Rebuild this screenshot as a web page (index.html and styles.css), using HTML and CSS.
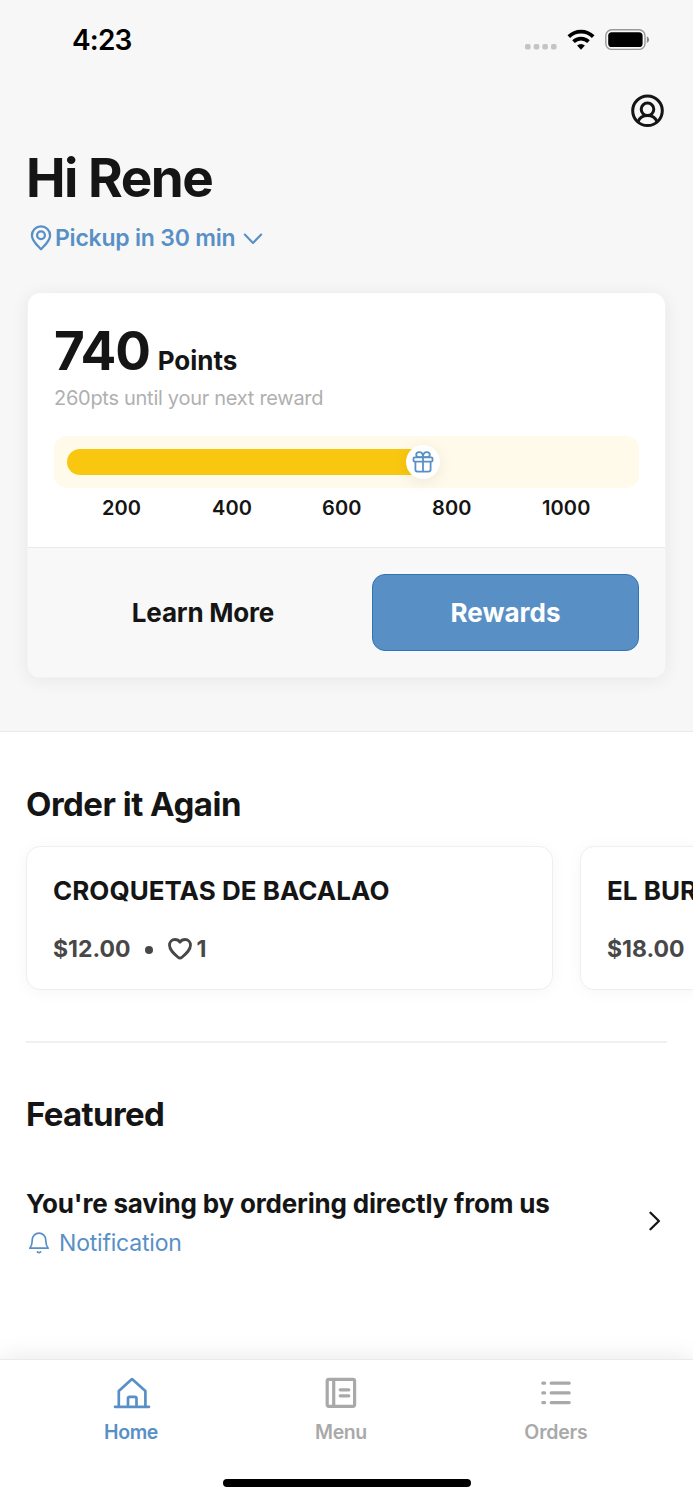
FILE: index.html
```html
<!DOCTYPE html>
<html lang="en">
<head>
<meta charset="utf-8">
<title>Home</title>
<link rel="stylesheet" href="styles.css">
</head>
<body>
<div class="app">
  <header class="hero">
    <div class="status">
      <span class="clock">4:23</span>
      <div class="indicators">
        <svg width="32" height="6" viewBox="0 0 32 6" fill="#c4c4c4"><rect width="5.6" height="5.6" rx="1.8"/><rect x="8.7" width="5.6" height="5.6" rx="1.8"/><rect x="17.3" width="5.6" height="5.6" rx="1.8"/><rect x="26" width="5.6" height="5.6" rx="1.8"/></svg>
        <svg class="wifi" width="28" height="22" viewBox="0 0 28 22" fill="none" stroke="#000" stroke-width="3.7"><path d="M1.8 7.6A17.3 17.3 0 0 1 26.2 7.6"/><path d="M6.5 12.6A10.7 10.7 0 0 1 21.5 12.6"/><path d="M14 20.7 10.1 16.6A5.8 5.8 0 0 1 17.9 16.6Z" fill="#000" stroke="none"/></svg>
        <svg class="battery" width="45" height="22" viewBox="0 0 45 22"><rect x=".8" y=".8" width="39.2" height="19.6" rx="6" fill="none" stroke="#999" stroke-width="1.4"/><rect x="3.2" y="3.2" width="34.4" height="14.8" rx="3.6"/><path d="M41.8 7.4C44.8 8.4 44.8 12.8 41.8 13.8Z" fill="#888"/></svg>
      </div>
    </div>
    <div class="profile">
      <svg width="34" height="34" viewBox="0 0 34 34" fill="none" stroke="#151515" stroke-width="3"><circle cx="17.5" cy="16.8" r="14.8"/><circle cx="17.5" cy="15.3" r="6.3"/><path d="M7.9 27.8C9.7 23.6 12.9 21.6 17.5 21.6S25.3 23.6 27.1 27.8"/></svg>
    </div>
    <h1 class="greeting">Hi Rene</h1>
    <div class="pickup">
      <svg class="pin" width="22" height="26" viewBox="0 0 22 26" fill="none" stroke="#5890c6" stroke-width="2.3"><path d="M11 24.2C8 20.9 1.9 16 1.9 10.4a9.1 9.1 0 0 1 18.2 0C20.1 16 14 20.9 11 24.2Z" stroke-linejoin="round"/><circle cx="11" cy="10.3" r="3.9"/></svg>
      <span class="pickup-text">Pickup in 30 min</span>
      <svg class="caret" width="20" height="12" viewBox="0 0 20 12" fill="none" stroke="#5890c6" stroke-width="2.1" stroke-linecap="round" stroke-linejoin="round"><path d="M1.8 1.5 10 9.9 18.2 1.5"/></svg>
    </div>
    <section class="points">
      <div class="points-body">
        <div class="score"><span class="score-value">740</span><span class="score-unit">Points</span></div>
        <p class="until">260pts until your next reward</p>
        <div class="track">
          <div class="fill">
            <div class="gift">
              <svg width="22" height="22" viewBox="0 0 22 22" fill="none" stroke="#5890c6" stroke-width="1.8" stroke-linejoin="round"><rect x="1.5" y="6.4" width="19" height="4.2" rx="1"/><path d="M3.4 10.6V18.6a2 2 0 0 0 2 2H16.6a2 2 0 0 0 2-2V10.6M11 5V20.6M11 6.2H7A2.8 2.8 0 0 1 4.2 3.8C4.2 2.2 5.5 1.2 7.2 1.2 9.7 1.2 11 3.6 11 6.2ZM11 6.2H15A2.8 2.8 0 0 0 17.8 3.8C17.8 2.2 16.5 1.2 14.8 1.2 12.3 1.2 11 3.6 11 6.2Z"/></svg>
            </div>
          </div>
        </div>
        <div class="ticks"><span>200</span><span>400</span><span>600</span><span>800</span><span>1000</span></div>
      </div>
      <div class="points-actions">
        <button class="btn">Learn More</button>
        <button class="btn btn-primary">Rewards</button>
      </div>
    </section>
  </header>
  <main class="content">
    <h2 class="heading order-heading">Order it Again</h2>
    <div class="carousel">
      <article class="item">
        <h3 class="item-name">CROQUETAS DE BACALAO</h3>
        <div class="item-meta">
          <span class="price">$12.00</span><span class="dot"></span>
          <svg class="heart" width="24" height="22" viewBox="0 0 24 22" fill="none" stroke="#474747" stroke-width="2.8" stroke-linejoin="round"><path d="M12 4.2C13.2 2.4 15 1.5 17 1.5 20.2 1.5 22.5 4 22.5 7.3 22.5 12 18.2 15.6 14 19.2Q12 20.9 10 19.2C5.8 15.6 1.5 12 1.5 7.3 1.5 4 3.8 1.5 7 1.5 9 1.5 10.8 2.4 12 4.2Z"/></svg>
          <span>1</span>
        </div>
      </article>
      <article class="item">
        <h3 class="item-name">EL BUR</h3>
        <div class="item-meta"><span class="price">$18.00</span></div>
      </article>
    </div>
    <hr class="divider">
    <h2 class="heading featured-heading">Featured</h2>
    <div class="feature">
      <div>
        <h3 class="feature-title">You're saving by ordering directly from us</h3>
        <div class="feature-kind">
          <svg width="22" height="22" viewBox="0 0 22 22" fill="none" stroke="#5890c6" stroke-width="1.7" stroke-linecap="round" stroke-linejoin="round"><path d="M1.8 16.2C3.6 14 4.2 12.4 4.2 8.8V8A6.8 6.8 0 0 1 17.8 8V8.8C17.8 12.4 18.4 14 20.2 16.2Z"/><path d="M9.4 19.8Q11 21.4 12.6 19.8"/></svg>
          <span class="kind-label">Notification</span>
        </div>
      </div>
      <svg class="next" width="12" height="20" viewBox="0 0 12 20" fill="none" stroke="#151515" stroke-width="2.3" stroke-linecap="round" stroke-linejoin="round"><path d="M1.5 1.8 9.9 10 1.5 18.2"/></svg>
    </div>
  </main>
  <nav class="tabs">
    <div class="tab-list">
      <a class="tab tab-home">
        <svg width="38" height="34" viewBox="0 0 38 34" fill="none" stroke="#5890c6" stroke-width="2.7" stroke-linecap="round" stroke-linejoin="round"><path d="M2 30.8H36M5.8 30.5V15L19 3.1 32.4 15V30.5M15 30.5V22.5Q15 20.8 16.7 20.8H21.8Q23.5 20.8 23.5 22.5V30.5"/></svg>
        <span>Home</span>
      </a>
      <a class="tab tab-menu">
        <svg width="32" height="34" viewBox="0 0 32 34" fill="none" stroke="#a9a9a9" stroke-width="3.2" stroke-linecap="round"><rect x="2.2" y="3.4" width="27.4" height="27" rx="1.8"/><path d="M8.7 4V30M15.2 13.8H23.8M15.2 19.8H23.8"/></svg>
        <span>Menu</span>
      </a>
      <a class="tab tab-orders">
        <svg width="32" height="34" viewBox="0 0 32 34" fill="none" stroke="#a9a9a9" stroke-width="3.2" stroke-linecap="round"><path d="M2.8 7.2H4.6M11.2 7.2H29.2M2.8 16.9H4.6M11.2 16.9H29.2M2.8 26.6H4.6M11.2 26.6H29.2"/></svg>
        <span>Orders</span>
      </a>
    </div>
    <div class="home-bar"></div>
  </nav>
</div>
</body>
</html>
```
FILE: styles.css
```css
* { box-sizing: border-box; }
body { margin: 0; font-family: Inter, "Liberation Sans", sans-serif; color: #151515; background: #fff; }
h1, h2, h3, p { margin: 0; white-space: nowrap; }
svg { display: block; flex: none; }
.app { width: 693px; height: 1500px; overflow: hidden; display: flex; flex-direction: column; background: #fff; }

.hero { height: 732px; flex: none; padding: 0 27px; background: #f7f7f7; border-bottom: 1px solid #e9e9e9; }
.status { height: 80px; padding: 25px 16.5px 0 45px; display: flex; justify-content: space-between; align-items: flex-start; }
.clock { font-size: 28px; line-height: 31px; font-weight: 600; letter-spacing: -.8px; color: #000; }
.indicators { display: flex; align-items: flex-start; }
.indicators > svg:first-child { margin: 19px 10px 0 0; }
.wifi { margin: 4px 10px 0 0; }
.battery { margin-top: 4px; }
.profile { height: 67px; padding-top: 14px; display: flex; justify-content: flex-end; margin-right: 2px; }
.greeting { padding-top: 1px; font-size: 53px; line-height: 61px; font-weight: 700; letter-spacing: -1.5px; margin-left: -1px; }
.pickup { height: 32px; margin-top: 14px; padding-left: 3px; display: flex; align-items: flex-start; color: #5890c6; font-size: 23px; line-height: 31px; font-weight: 600; letter-spacing: -.22px; }
.pin { margin: 2px 3px 0 0; }
.caret { margin: 10px 0 0 8px; }

.points { margin-top: 38px; height: 385px; border-radius: 13px; background: #fff; box-shadow: 0 2px 18px rgba(0,0,0,.07); overflow: hidden; border: 1px solid #f3f3f3; border-top: 0; }
.points-body { height: 254px; padding: 28px 26px 0; }
.score { height: 61px; display: flex; align-items: baseline; }
.score-value { font-size: 53px; line-height: 61px; font-weight: 700; letter-spacing: -1.2px; }
.score-unit { margin-left: 8px; font-size: 26px; font-weight: 700; }
.until { height: 30px; font-size: 20px; line-height: 32px; letter-spacing: -.28px; color: #b0b0b0; }
.track { height: 52px; margin-top: 24px; padding: 13px; border-radius: 13px; background: #fffaea; }
.fill { position: relative; width: 356px; height: 26px; border-radius: 13px; background: #fac710; }
.gift { position: absolute; right: -17px; top: -4px; width: 34px; height: 34px; border-radius: 50%; background: #fff; box-shadow: 0 3px 16px rgba(0,0,0,.08); display: grid; place-items: center; }
.ticks { padding-left: 48px; display: grid; grid-template-columns: repeat(5, 110px); font-size: 20px; line-height: 40px; font-weight: 600; letter-spacing: .1px; }
.points-actions { height: 131px; border-top: 1px solid #eaeaea; background: #f8f8f8; padding: 26px; display: grid; grid-template-columns: 1fr 267px; gap: 20px; }
.btn { height: 77px; padding: 0; border: 0; background: none; font: 700 26px/77px Inter, sans-serif; letter-spacing: -.2px; color: #151515; }
.btn-primary { border: 1px solid #3273b3; border-radius: 13px; background: #5890c6; color: #fff; line-height: 75px; letter-spacing: 0; }

.content { height: 627px; flex: none; padding: 0 27px; }
.heading { font-size: 33px; line-height: 44px; font-weight: 700; margin-left: -1px; }
.order-heading { padding-top: 50px; letter-spacing: -.5px; }
.carousel { display: flex; gap: 27px; margin: 20px -27px 0 -1px; }
.item { flex: none; width: 527px; height: 144px; padding: 26px 26px 0; border: 1px solid #efefef; border-radius: 14px; background: #fff; box-shadow: 0 2px 16px rgba(0,0,0,.04); }
.item-name { font-size: 26px; line-height: 36px; font-weight: 700; letter-spacing: .03px; }
.item-meta { margin-top: 24px; display: flex; align-items: center; font-size: 23px; line-height: 32px; font-weight: 700; color: #474747; }
.dot { width: 8px; height: 8px; margin: 2px 15px 0 14px; border-radius: 50%; background: #474747; }
.heart { margin-right: 5px; }
.divider { height: 2px; margin: 51px 0 0 -1px; width: 641px; border: 0; background: #f0f0f0; }
.featured-heading { margin-top: 49px; letter-spacing: -.65px; }
.feature { display: flex; justify-content: space-between; margin-top: 50px; }
.feature-title { margin-left: -1px; font-size: 26px; line-height: 36px; font-weight: 700; letter-spacing: -.18px; }
.feature-kind { display: flex; align-items: center; gap: 9px; margin: 5px 0 0 1px; font-size: 23px; line-height: 32px; letter-spacing: -.2px; color: #5890c6; }
.next { margin: 25px 5px 0 0; }

.tabs { height: 141px; flex: none; position: relative; background: #fff; border-top: 1px solid #eaeaea; box-shadow: 0 0 24px rgba(0,0,0,.1); }
.tab-list { display: flex; justify-content: space-between; padding: 14px 105px 0 104px; }
.tab { display: flex; flex-direction: column; align-items: center; font-size: 19.5px; line-height: 27px; font-weight: 600; letter-spacing: -.4px; color: #a9a9a9; padding-top: 2px; }
.tab span { margin-top: 9px; }
.tab-home { width: 54px; color: #5890c6; }
.tab-home svg { margin-left: 1px; }
.tab-menu { width: 52px; }
.tab-orders { width: 64px; letter-spacing: -.2px; }
.home-bar { width: 248px; height: 8px; margin: 33px auto 0; border-radius: 4px; background: #000; }
```
